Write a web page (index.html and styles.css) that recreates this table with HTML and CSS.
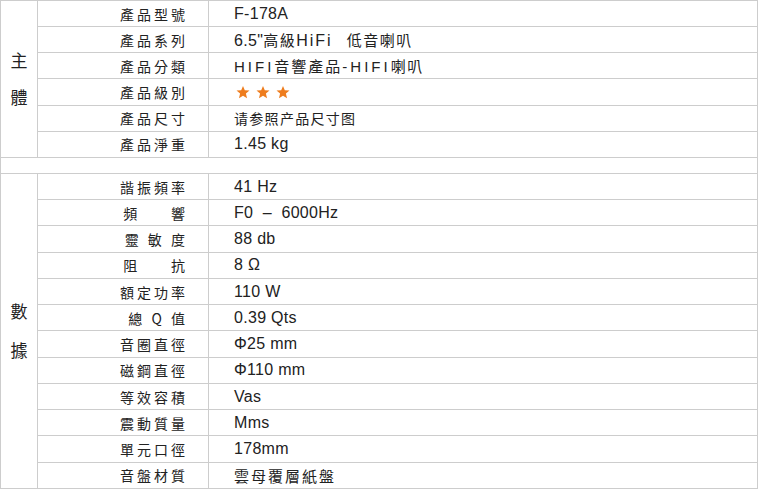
FILE: index.html
```html
<!DOCTYPE html>
<html lang="zh-Hant">
<head>
<meta charset="utf-8">
<title>產品參數</title>
<link rel="stylesheet" href="styles.css">
</head>
<body>
<div class="spec">
  <section class="group g1">
    <div class="side"><span>主</span><span>體</span></div>
    <div class="rows">
      <div class="row"><div class="label">產品型號</div><div class="value"><span>F-178A</span></div></div>
      <div class="row"><div class="label">產品系列</div><div class="value"><span>6.5"<span class="cjk">高級</span><span class="hifi">HiFi</span>   <span class="cjk">低音喇叭</span></span></div></div>
      <div class="row"><div class="label">產品分類</div><div class="value"><span><span class="narrow">HIFI</span><span class="cjk wide">音響產品</span><span class="narrow">-HIFI</span><span class="cjk">喇叭</span></span></div></div>
      <div class="row"><div class="label">產品級別</div><div class="value stars"><svg class="star" viewBox="0 0 24 24"><path d="M12 1.5l3.1 7.4 8 .6-6.1 5.2 1.9 7.8L12 18.3 5.1 22.5 7 14.7.9 9.5l8-.6z"/></svg><svg class="star" viewBox="0 0 24 24"><path d="M12 1.5l3.1 7.4 8 .6-6.1 5.2 1.9 7.8L12 18.3 5.1 22.5 7 14.7.9 9.5l8-.6z"/></svg><svg class="star" viewBox="0 0 24 24"><path d="M12 1.5l3.1 7.4 8 .6-6.1 5.2 1.9 7.8L12 18.3 5.1 22.5 7 14.7.9 9.5l8-.6z"/></svg></div></div>
      <div class="row"><div class="label">產品尺寸</div><div class="value"><span class="cjk sc">请参照产品尺寸图</span></div></div>
      <div class="row"><div class="label">產品淨重</div><div class="value"><span>1.45 kg</span></div></div>
    </div>
  </section>
  <div class="spacer"></div>
  <section class="group g2">
    <div class="side"><span>數</span><span>據</span></div>
    <div class="rows">
      <div class="row"><div class="label">諧振頻率</div><div class="value"><span>41 Hz</span></div></div>
      <div class="row"><div class="label">頻     響</div><div class="value"><span>F0  –  6000Hz</span></div></div>
      <div class="row"><div class="label">靈 敏 度</div><div class="value"><span>88 db</span></div></div>
      <div class="row"><div class="label">阻     抗</div><div class="value"><span>8 Ω</span></div></div>
      <div class="row"><div class="label">額定功率</div><div class="value"><span>110 W</span></div></div>
      <div class="row"><div class="label">總 Q 值</div><div class="value"><span>0.39 Qts</span></div></div>
      <div class="row"><div class="label">音圈直徑</div><div class="value"><span>Φ25 mm</span></div></div>
      <div class="row"><div class="label">磁鋼直徑</div><div class="value"><span>Φ110 mm</span></div></div>
      <div class="row"><div class="label">等效容積</div><div class="value"><span>Vas</span></div></div>
      <div class="row"><div class="label">震動質量</div><div class="value"><span>Mms</span></div></div>
      <div class="row"><div class="label">單元口徑</div><div class="value"><span>178mm</span></div></div>
      <div class="row"><div class="label">音盤材質</div><div class="value"><span class="cjk wide">雲母覆層紙盤</span></div></div>
    </div>
  </section>
</div>
</body>
</html>
```

FILE: styles.css
```css
html, body {
  margin: 0;
  padding: 0;
  background: #ffffff;
}

body {
  color: #222222;
  font-family: "Liberation Sans", "Noto Sans CJK TC", sans-serif;
}

.spec {
  box-sizing: border-box;
  width: 758px;
  border-left: 1px solid #cdcdcd;
  border-right: 1px solid #cdcdcd;
  border-top: 1px solid #cdcdcd;
}

.group {
  display: grid;
  grid-template-columns: 37px 1fr;
}

.side {
  box-sizing: border-box;
  border-right: 1px solid #cdcdcd;
  border-bottom: 1px solid #cdcdcd;
  display: flex;
  flex-direction: column;
  align-items: center;
  justify-content: center;
  gap: 19px;
  font-family: "Noto Sans CJK TC", sans-serif;
  font-size: 17px;
  line-height: 18px;
}

.g2 .side {
  gap: 21px;
}

.spacer {
  box-sizing: border-box;
  height: 16px;
  border-bottom: 1px solid #cdcdcd;
}

.rows {
  display: flex;
  flex-direction: column;
}

.row {
  box-sizing: border-box;
  display: grid;
  grid-template-columns: 171px 1fr;
  border-bottom: 1px solid #cdcdcd;
}

.g1 .row {
  height: 26.17px;
}

.g2 .row {
  height: 26.25px;
}

.label {
  box-sizing: border-box;
  border-right: 1px solid #cdcdcd;
  display: flex;
  align-items: center;
  justify-content: flex-end;
  padding-right: 20px;
  font-family: "Noto Sans CJK TC", sans-serif;
  font-size: 14px;
  letter-spacing: 3px;
  white-space: pre;
}

.value {
  display: flex;
  align-items: center;
  padding-left: 25px;
  font-size: 16px;
  letter-spacing: 0.3px;
  white-space: pre;
}

.cjk {
  font-family: "Noto Sans CJK TC", sans-serif;
  font-size: 15px;
  letter-spacing: 1.5px;
}

.cjk.sc {
  font-family: "Noto Sans CJK SC", sans-serif;
  font-size: 14px;
  letter-spacing: 1.3px;
}

.cjk.wide {
  letter-spacing: 2px;
}

.hifi {
  letter-spacing: 2px;
}

.narrow {
  font-family: "Liberation Sans Narrow", "Liberation Sans", sans-serif;
  font-size: 15px;
  letter-spacing: 3px;
}

.stars {
  gap: 6px;
  padding-left: 27px;
}

.star {
  width: 14px;
  height: 14px;
  fill: #ee7d1e;
}
```
